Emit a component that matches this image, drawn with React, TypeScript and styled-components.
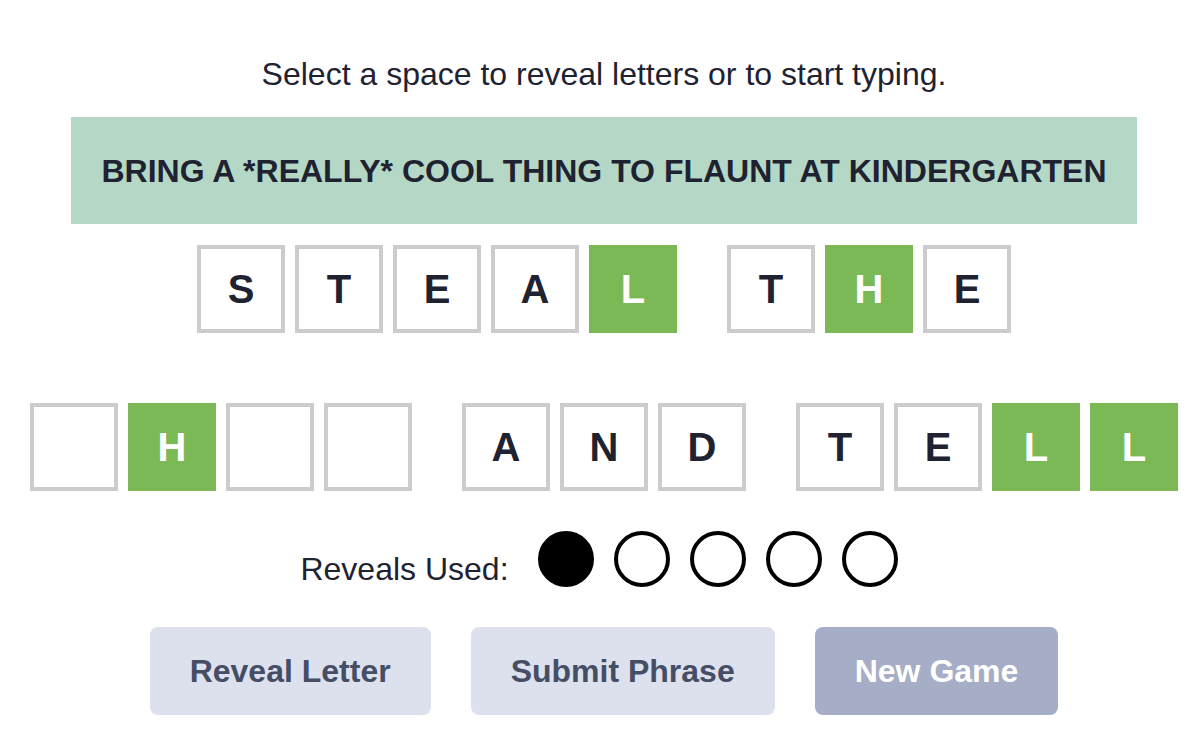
import React from "react";
import styled, { createGlobalStyle } from "styled-components";

const GlobalStyle = createGlobalStyle`
  html, body {
    margin: 0;
    padding: 0;
    background: #ffffff;
  }
  body {
    font-family: "Liberation Sans", Arial, Helvetica, sans-serif;
    color: #1f2231;
  }
`;

const Page = styled.div`
  display: flex;
  flex-direction: column;
  align-items: center;
  padding: 56px 0 0 4px;
`;

const Instruction = styled.p`
  margin: 0;
  font-size: 32px;
  line-height: 36px;
  color: #1f2231;
`;

const Clue = styled.div`
  margin-top: 25px;
  width: 1066px;
  height: 107px;
  background: #b5d8c6;
  display: flex;
  align-items: center;
  justify-content: center;
  font-size: 32px;
  font-weight: 700;
  line-height: 36px;
  color: #1f2231;
`;

const Board = styled.div`
  margin-top: 21px;
  display: flex;
  flex-direction: column;
  align-items: center;
  gap: 70px;
`;

const Row = styled.div`
  display: flex;
  gap: 50px;
`;

const Word = styled.div`
  display: flex;
  gap: 10px;
`;

const Tile = styled.div<{ $hit?: boolean }>`
  box-sizing: border-box;
  width: 88px;
  height: 88px;
  display: flex;
  align-items: center;
  justify-content: center;
  border: 4px solid ${(p) => (p.$hit ? "#7ab955" : "#cccccc")};
  background: ${(p) => (p.$hit ? "#7ab955" : "#ffffff")};
  color: ${(p) => (p.$hit ? "#ffffff" : "#1f2231")};
  font-size: 40px;
  font-weight: 700;
`;

const Reveals = styled.div`
  margin-top: 40px;
  padding-right: 10px;
  display: flex;
  align-items: flex-end;
  gap: 20px;
`;

const RevealLabel = styled.span`
  font-size: 32px;
  line-height: 36px;
  margin-right: 9px;
  color: #1f2231;
`;

const Dot = styled.div<{ $used?: boolean }>`
  box-sizing: border-box;
  width: 56px;
  height: 56px;
  border-radius: 50%;
  border: 4px solid #000000;
  background: ${(p) => (p.$used ? "#000000" : "#ffffff")};
`;

const Actions = styled.div`
  margin-top: 40px;
  display: flex;
  gap: 40px;
`;

const Button = styled.button<{ $dark?: boolean }>`
  height: 88px;
  padding: 0 40px;
  border: none;
  border-radius: 8px;
  background: ${(p) => (p.$dark ? "#a6adc6" : "#dde1ee")};
  color: ${(p) => (p.$dark ? "#ffffff" : "#454e64")};
  font-family: "Liberation Sans", Arial, Helvetica, sans-serif;
  font-size: 32px;
  font-weight: 700;
  cursor: pointer;
`;

type Letter = { ch: string; hit?: boolean };

const rows: Letter[][][] = [
  [
    [{ ch: "S" }, { ch: "T" }, { ch: "E" }, { ch: "A" }, { ch: "L", hit: true }],
    [{ ch: "T" }, { ch: "H", hit: true }, { ch: "E" }],
  ],
  [
    [{ ch: "" }, { ch: "H", hit: true }, { ch: "" }, { ch: "" }],
    [{ ch: "A" }, { ch: "N" }, { ch: "D" }],
    [{ ch: "T" }, { ch: "E" }, { ch: "L", hit: true }, { ch: "L", hit: true }],
  ],
];

const revealsUsed = 1;

const App: React.FC = () => {
  return (
    <>
      <GlobalStyle />
      <Page>
        <Instruction>Select a space to reveal letters or to start typing.</Instruction>
        <Clue>BRING A *REALLY* COOL THING TO FLAUNT AT KINDERGARTEN</Clue>

        <Board>
          {rows.map((words, r) => (
            <Row key={r}>
              {words.map((word, w) => (
                <Word key={w}>
                  {word.map((l, i) => (
                    <Tile key={i} $hit={l.hit}>
                      {l.ch}
                    </Tile>
                  ))}
                </Word>
              ))}
            </Row>
          ))}
        </Board>

        <Reveals>
          <RevealLabel>Reveals Used:</RevealLabel>
          {[0, 1, 2, 3, 4].map((i) => (
            <Dot key={i} $used={i < revealsUsed} />
          ))}
        </Reveals>

        <Actions>
          <Button>Reveal Letter</Button>
          <Button>Submit Phrase</Button>
          <Button $dark>New Game</Button>
        </Actions>
      </Page>
    </>
  );
};

export default App;
